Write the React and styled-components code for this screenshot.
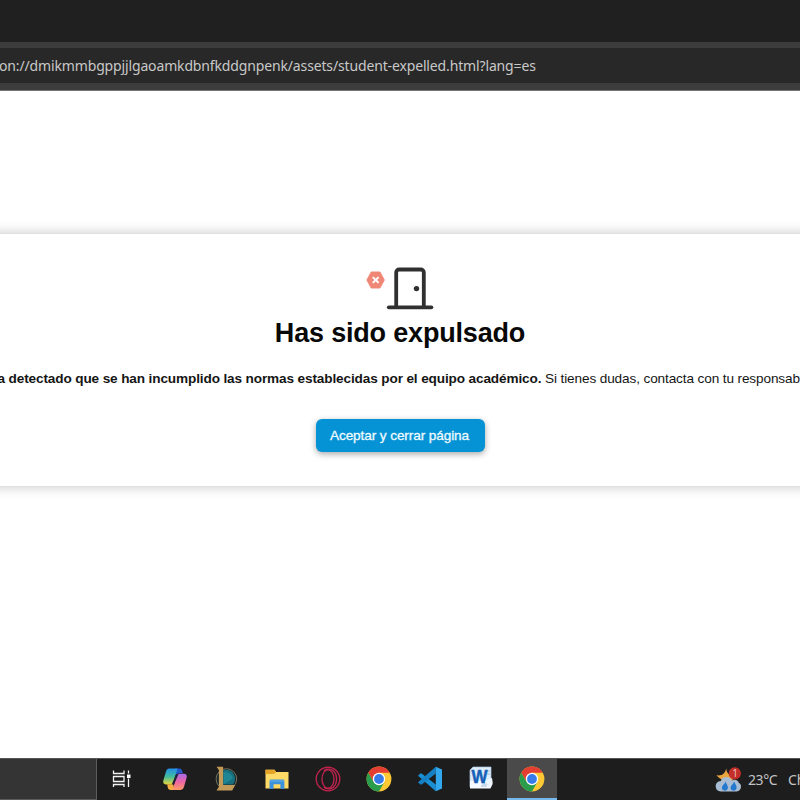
import React from "react";
import styled, { createGlobalStyle } from "styled-components";

const GlobalStyle = createGlobalStyle`
  * { box-sizing: border-box; }
  html, body { margin: 0; padding: 0; background: #fff; overflow: hidden; }
`;

const Screen = styled.div`
  width: 800px;
  height: 800px;
  display: flex;
  flex-direction: column;
  overflow: hidden;
  background: #fff;
`;

const TabStrip = styled.header`
  flex: 0 0 42px;
  background: #202020;
`;

const Toolbar = styled.div`
  flex: 0 0 49px;
  padding: 6px 0 7px;
  background: #3c3c3c;
  border-bottom: 1px solid #777;
`;

const AddressBar = styled.div`
  height: 35px;
  display: flex;
  align-items: center;
  background: #282828;
`;

const Url = styled.span`
  margin-left: -1px;
  font: 14px/20px "Noto Sans", "Open Sans", sans-serif;
  letter-spacing: -0.145px;
  color: #c8c8c8;
  white-space: nowrap;
`;

const Page = styled.main`
  flex: 1;
  min-height: 0;
  padding-top: 143px;
  overflow: hidden;
  font-family: "Liberation Sans", Arial, sans-serif;
`;

const Card = styled.section`
  height: 252px;
  padding-top: 30px;
  margin: 0 -20px;
  display: flex;
  flex-direction: column;
  align-items: center;
  background: #fff;
  box-shadow: 0 0 12px rgba(0, 0, 0, 0.25);
`;

const DoorIcon = styled.svg`
  display: block;
  width: 70px;
  height: 48px;
`;

const Title = styled.h1`
  margin: 4px 0 0;
  font-size: 27px;
  line-height: 35px;
  font-weight: 700;
  letter-spacing: -0.18px;
  color: #080808;
`;

const Message = styled.p`
  width: 805px;
  margin: 19px 0 0;
  font-size: 13.6px;
  line-height: 18px;
  color: #151515;
  white-space: nowrap;
  letter-spacing: -0.12px;
`;

const Lead = styled.strong`
  letter-spacing: -0.13px;
`;

const AcceptButton = styled.button`
  width: 169px;
  height: 33px;
  margin-top: 31px;
  padding: 0 1px 0 0;
  border: 0;
  border-radius: 6px;
  background: #0693d5;
  color: #eefaff;
  font: 400 13.6px "Liberation Sans", Arial, sans-serif;
  letter-spacing: -0.1px;
  -webkit-text-stroke: 0.3px #eefaff;
  box-shadow: 0 2px 6px rgba(0, 0, 0, 0.35);
`;

const Taskbar = styled.footer`
  flex: 0 0 42px;
  display: flex;
  background: #1d1d1d;
  border-top: 1px solid #555;
`;

const SearchBox = styled.div`
  width: 97px;
  background: #343434;
  border-right: 1px solid #5c5c5c;
  border-bottom: 1px solid #5c5c5c;
`;

const Slot = styled.div`
  width: 50px;
  margin-right: ${(p) => p.$gap ?? 1}px;
  display: flex;
  align-items: center;
  justify-content: center;
  background: ${(p) => (p.$active ? "#4a4a4a" : "transparent")};
  border-bottom: 2px solid ${(p) => (p.$active ? "#76b9ed" : "transparent")};
`;

const AppIcon = styled.svg`
  display: block;
  width: 26px;
  height: 26px;
`;

const Weather = styled.div`
  margin-left: auto;
  width: 85px;
  display: flex;
  align-items: center;
  white-space: nowrap;
  font: 14px/20px "Noto Sans", "Open Sans", sans-serif;
  color: #c4c4c4;
`;

const Temperature = styled.span`
  flex: none;
  margin-left: 6px;
  width: 40px;
  letter-spacing: -0.4px;
`;

function Door() {
  return (
    <DoorIcon viewBox="365 264 70 48">
      <path d="M371.2 271.9h8.8l4.4 8.1-4.4 8.1h-8.8l-4.4-8.1z" fill="#ef8676" stroke="#ef8676" strokeWidth=".8" strokeLinejoin="round" />
      <path d="m372.8 277.1 5.8 5.8m0-5.8-5.8 5.8" stroke="#fff" strokeWidth="2" />
      <path d="M396.2 307v-34.5a3 3 0 0 1 3-3h21.6a3 3 0 0 1 3 3V307" fill="none" stroke="#303030" strokeWidth="3.8" />
      <path d="M388.8 307.3h42.6" stroke="#303030" strokeWidth="3.8" strokeLinecap="round" />
      <circle cx="416.5" cy="288.6" r="2.7" fill="#303030" />
    </DoorIcon>
  );
}

function TaskView() {
  return (
    <AppIcon viewBox="0 0 26 26" fill="none" stroke="#f2f2f2" strokeWidth="1.3">
      <path d="M4.5 4.5v3H15v-3M4.5 21v-2.5H15V21M4.5 10.5H15v5H4.5zM19.5 4.5v3m0 5v8.5" />
      <path d="M18 8.5h3.5V12H18z" fill="#fff" stroke="none" />
    </AppIcon>
  );
}

function Copilot() {
  return (
    <AppIcon viewBox="0 0 26 26">
      <defs>
        <linearGradient id="cpA" x1="0" y1="0" x2="0" y2="1">
          <stop offset="0" stopColor="#238fe8" /><stop offset=".5" stopColor="#40bba0" /><stop offset="1" stopColor="#e8d63b" />
        </linearGradient>
        <linearGradient id="cpB" x1="0" y1="0" x2="0" y2="1">
          <stop offset="0" stopColor="#a56bea" /><stop offset=".5" stopColor="#ee64a4" /><stop offset="1" stopColor="#ff9a65" />
        </linearGradient>
      </defs>
      <path d="M13 2.5h4.5c1.6 0 2.3 1 2.7 2.5l.7 2.2h-4.1l-3.3 2z" fill="#2459cc" />
      <path d="M7.2 2.5h8.3l-4.3 14.2c-.4 1.2-1.2 1.8-2.6 1.8H4c-2.4 0-3.3-1.9-2.6-4.2L4 5.5c.6-2 1.5-3 3.2-3z" fill="url(#cpA)" />
      <path d="M5.2 18.3h6l1.5 5.6h-4c-1.8 0-2.6-1-3-2.7z" fill="#f5ae42" />
      <path d="M17.7 7.7H22c2.4 0 3.2 1.8 2.6 4l-2.5 8.9c-.6 2-1.6 3.3-3.6 3.3h-8L14.8 10c.5-1.5 1.3-2.3 2.9-2.3z" fill="url(#cpB)" />
      <path d="M14.2 8.2h2.3l-4.5 10H9.8z" fill="#24223a" />
    </AppIcon>
  );
}

function League() {
  return (
    <AppIcon viewBox="0 0 26 26">
      <circle cx="13.4" cy="13" r="10.3" fill="#17292c" stroke="#77715b" strokeWidth="1" />
      <path d="M10 4.5a8.6 8.6 0 0 1 12 8.5c0 2.2-.8 4-2 5.4H10z" fill="#176f7e" />
      <path d="M11 6c5 0 8.5 3 9 6.5L11 18z" fill="#2490a0" opacity=".7" />
      <path d="M3.5.8h6.6v18.2h12.1L19.2 24.4H3.5l2.4-3.6V4z" fill="#c49a58" />
    </AppIcon>
  );
}

function Folder() {
  return (
    <AppIcon viewBox="0 0 26 26">
      <path d="M1.5 3.8h9l1.6 2.3h12.4v16.4h-23z" fill="#ffda66" />
      <path d="M1.5 3.8h9l1.6 2.3-2 1.8H1.5z" fill="#e5a327" />
      <path d="M5.5 23v-7.7c0-1 .7-1.7 1.7-1.7h11.5c1 0 1.7.7 1.7 1.7V23h-4v-4.7H9.6V23z" fill="#3b91db" />
      <path d="M6 14.2h14v1.6H6z" fill="#56a7e5" />
    </AppIcon>
  );
}

function Opera() {
  return (
    <AppIcon viewBox="0 0 26 26" fill="none" stroke="#bd234d" strokeWidth="1.35">
      <circle cx="13" cy="13" r="11.8" />
      <ellipse cx="13" cy="13" rx="6" ry="9.2" />
      <path d="M8.8 5C11 2.8 15 2.5 18 4.6c4.8 4 4.8 12.8 0 16.8-3 2.1-7 1.8-9.2-.4" />
    </AppIcon>
  );
}

function Chrome() {
  return (
    <AppIcon viewBox="0 0 26 26">
      <circle cx="13" cy="13" r="12.4" fill="#fcc934" />
      <path d="M2.26 6.8A12.4 12.4 0 0 1 23.74 6.8H13L7.6 16.1z" fill="#e43e33" />
      <path d="M2.26 6.8A12.4 12.4 0 0 0 13 25.4l5.4-9.3H7.6z" fill="#299d4b" />
      <circle cx="13" cy="13" r="6.2" fill="#fff" />
      <circle cx="13" cy="13" r="4.9" fill="#377bea" />
    </AppIcon>
  );
}

function Code() {
  return (
    <AppIcon viewBox="0 0 26 26">
      <path d="m1 9.8 2.2-2.3 1.5.1 14.1 10.9v6.8z" fill="#198ed2" />
      <path d="M18.8.7 1 16.2l2.2 2.3 1.5-.1L18.8 7.5z" fill="#1680c4" />
      <path d="M18.8.7 25 3.6v18.8l-6.2 2.9z" fill="#32a8ee" />
    </AppIcon>
  );
}

const WordLetter = styled.text`
  font: 700 19px "Liberation Sans", sans-serif;
`;

function Word() {
  return (
    <AppIcon viewBox="0 0 26 26">
      <path d="M5 1h18v20H2V4z" fill="#deedf9" stroke="#aac6df" strokeWidth=".7" />
      <path d="M2 15h15l7-3 .5 5-2 5.5H2z" fill="#f7fbff" />
      <path d="M14 18h6m-7 2h6M19 5h3m-3 3h3" stroke="#8dabcb" strokeWidth=".8" />
      <WordLetter x="3.5" y="17" textLength="16" lengthAdjust="spacingAndGlyphs" fill="#1760b7" stroke="#1760b7" strokeWidth=".5">W</WordLetter>
      <path d="m17 15 7-2.5.5 6-3 3.3z" fill="#edf5ff" />
    </AppIcon>
  );
}

const WeatherIcon = styled(AppIcon)`
  flex: none;
  width: 27px;
`;

const BadgeCount = styled.text`
  font: 10px "Open Sans", sans-serif;
`;

function RainyNight() {
  return (
    <WeatherIcon viewBox="0 0 27 26">
      <path d="M11.2 1.3c.4 5 3.5 8.2 8.8 9-2.5 3.8-6.6 5.2-10.6 3.6C6.2 12.6 3.6 10.7 1.4 8.3c5.5.8 9-1.6 9.8-7z" fill="#e9a640" />
      <path d="M5.8 24.5C2.8 24.5.7 22.3.7 19.3s2-5 4.8-5c1.3-3 3.7-4.6 6.5-4.2 2.3.3 3.8 1.5 4.8 3.4 3-1.7 6.2-.5 7 2.2 1.5.7 2.2 2 2.2 3.9 0 2.9-1.8 4.9-4.5 4.9z" fill="#a8bdd4" />
      <path d="M10.5 14.5c-1 3-3.5 3.8-3.7 6.2a3.1 3.1 0 0 0 6.1.6c.5-2.2-1.5-4-2.4-6.8zm8.7 0c-1 3-3.5 3.8-3.7 6.2a3.1 3.1 0 0 0 6.1.6c.5-2.2-1.5-4-2.4-6.8z" fill="#2479cf" />
      <circle cx="19.8" cy="6.4" r="6.1" fill="#c22f2b" />
      <BadgeCount x="17.2" y="10.1" fill="#f4c5bd">1</BadgeCount>
    </WeatherIcon>
  );
}

const APPS = [
  { name: "copilot", Icon: Copilot },
  { name: "league", Icon: League },
  { name: "files", Icon: Folder },
  { name: "opera", Icon: Opera },
  { name: "chrome", Icon: Chrome },
  { name: "code", Icon: Code },
  { name: "word", Icon: Word },
  { name: "chrome-open", Icon: Chrome, active: true },
];

export default function App() {
  return (
    <>
      <GlobalStyle />
      <Screen>
        <TabStrip />
        <Toolbar>
          <AddressBar>
            <Url>on://dmikmmbgppjjlgaoamkdbnfkddgnpenk/assets/student-expelled.html?lang=es</Url>
          </AddressBar>
        </Toolbar>
        <Page>
          <Card>
            <Door />
            <Title>Has sido expulsado</Title>
            <Message>
              <Lead>a detectado que se han incumplido las normas establecidas por el equipo académico.</Lead>
              {" "}Si tienes dudas, contacta con tu responsab
            </Message>
            <AcceptButton>Aceptar y cerrar página</AcceptButton>
          </Card>
        </Page>
        <Taskbar>
          <SearchBox />
          <Slot $gap={3}><TaskView /></Slot>
          {APPS.map(({ name, Icon, active }) => (
            <Slot key={name} $active={active}><Icon /></Slot>
          ))}
          <Weather>
            <RainyNight />
            <Temperature>23°C</Temperature>
            <span>Ch</span>
          </Weather>
        </Taskbar>
      </Screen>
    </>
  );
}
